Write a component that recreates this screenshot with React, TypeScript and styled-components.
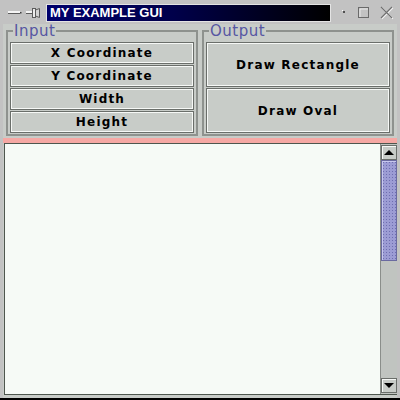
import * as React from "react";
import styled, { createGlobalStyle } from "styled-components";

const GlobalStyle = createGlobalStyle`
  html, body {
    margin: 0;
    padding: 0;
    width: 400px;
    height: 400px;
    overflow: hidden;
    background: #c4c4c4;
  }
`;

const Frame = styled.div`
  width: 400px;
  height: 400px;
  box-sizing: border-box;
  display: flex;
  flex-direction: column;
  background: #c2c2c2;
  border-bottom: 2px solid #000;
`;

const TitleBar = styled.div`
  height: 24px;
  flex: none;
  display: flex;
  align-items: flex-start;
  padding-top: 4px;
  box-sizing: border-box;
`;

const MenuGlyph = styled.svg`
  width: 46px;
  height: 18px;
  flex: none;
`;

const Title = styled.div`
  width: 285px;
  height: 18px;
  box-sizing: border-box;
  border: 1px solid #e4e4e4;
  background: linear-gradient(to right, #00006c 0%, #00004a 45%, #000000 100%);
  color: #fff;
  font-family: "Liberation Sans", Arial, sans-serif;
  font-weight: bold;
  font-size: 13px;
  line-height: 16px;
  padding-left: 3px;
  white-space: nowrap;
`;

const Controls = styled.svg`
  width: 69px;
  height: 18px;
  flex: none;
`;

const Client = styled.div`
  flex: 1;
  display: flex;
  flex-direction: column;
  margin: 0 3px;
  padding-bottom: 3px;
  background: #c8ccc8;
  min-height: 0;
`;

const ControlRow = styled.div`
  display: flex;
  gap: 4px;
  padding: 0 3px;
`;

const Group = styled.fieldset`
  flex: 1;
  margin: 0;
  min-width: 0;
  padding: 4px 2px 1px 2px;
  border: 2px solid #8e928e;
  display: flex;
  flex-direction: column;
  gap: 1px;
`;

const Caption = styled.legend`
  margin-left: 3px;
  padding: 0 1px;
  font-family: "DejaVu Sans", sans-serif;
  font-size: 15px;
  line-height: 14px;
  letter-spacing: 0.5px;
  color: #5656a2;
`;

const Button = styled.div<{ $tall?: boolean }>`
  height: ${(p) => (p.$tall ? 45 : 22)}px;
  box-sizing: border-box;
  border: 1px solid #6a6e6a;
  box-shadow: inset 0 0 0 1px #f6f8f6;
  background: #c8ccc8;
  display: flex;
  align-items: center;
  justify-content: center;
  font-family: "DejaVu Sans", sans-serif;
  font-weight: bold;
  font-size: 12px;
  letter-spacing: 1.2px;
  color: #000;
`;

const Divider = styled.div`
  height: 5px;
  margin-top: 2px;
  background: #f6a8a4;
  flex: none;
`;

const Pane = styled.div`
  flex: 1;
  display: flex;
  min-height: 0;
  border: 1px solid #4e564e;
  border-right: none;
  margin-left: 1px;
`;

const TextArea = styled.div`
  flex: 1;
  background: #f6faf6;
`;

const ScrollBar = styled.div`
  width: 17px;
  display: flex;
  flex-direction: column;
  background: #c0c4c0;
  border-left: 1px solid #8a8e8a;
  padding: 1px 0;
  box-sizing: border-box;
`;

const Arrow = styled.div<{ $down?: boolean }>`
  height: 15px;
  box-sizing: border-box;
  border: 1px solid #6a6e6a;
  box-shadow: inset 1px 1px 0 #f6f8f6;
  background: #c8ccc8;
  display: flex;
  align-items: center;
  justify-content: center;
  margin-top: ${(p) => (p.$down ? "auto" : "0")};

  &::after {
    content: "";
    border-left: 5px solid transparent;
    border-right: 5px solid transparent;
    ${(p) =>
      p.$down ? "border-top: 5px solid #000;" : "border-bottom: 5px solid #000;"}
  }
`;

const Thumb = styled.div`
  height: 101px;
  box-sizing: border-box;
  border: 1px solid #6a6aa0;
  box-shadow: inset 1px 1px 0 #c8c8ee;
  background-color: #9c9cd4;
  background-image: radial-gradient(circle, #6e6eb0 0.8px, transparent 1px);
  background-size: 3px 3px;
`;

const inputs = ["X Coordinate", "Y Coordinate", "Width", "Height"];
const outputs = ["Draw Rectangle", "Draw Oval"];

export default function App() {
  return (
    <>
      <GlobalStyle />
      <Frame>
        <TitleBar>
          {/* window menu: dash, dot and pin */}
          <MenuGlyph viewBox="0 0 46 18">
            <rect x="8" y="7" width="12" height="2" fill="#f4f4f4" />
            <rect x="8" y="9" width="12" height="1" fill="#5c5c5c" />
            <rect x="20" y="8" width="1.5" height="1.5" fill="#404040" />
            <rect x="26" y="7" width="7" height="2" fill="#f4f4f4" />
            <rect x="26" y="9" width="7" height="1" fill="#5c5c5c" />
            <rect x="32.5" y="4.5" width="3" height="9" fill="#ececec" stroke="#5c5c5c" strokeWidth="1" />
            <path d="M35.5 6 L39.5 4.5 L39.5 13.5 L35.5 12 Z" fill="#d4d4d4" stroke="#5c5c5c" strokeWidth="1" />
          </MenuGlyph>
          <Title>MY EXAMPLE GUI</Title>
          <Controls viewBox="0 0 69 18">
            <rect x="12" y="7" width="2" height="2" fill="#505050" />
            <rect x="11" y="6" width="1" height="1" fill="#fff" />
            <rect x="27.5" y="3.5" width="10" height="10" fill="none" stroke="#6a6a6a" />
            <path d="M29 13 V5 H37" fill="none" stroke="#f4f4f4" strokeWidth="0.8" />
            <path d="M50 3 L61 14 M61 3 L50 14" stroke="#f4f4f4" strokeWidth="1.4" transform="translate(0.8 0.8)" />
            <path d="M50 3 L61 14 M61 3 L50 14" stroke="#707070" strokeWidth="1.2" />
          </Controls>
        </TitleBar>
        <Client>
          <ControlRow>
            <Group>
              <Caption>Input</Caption>
              {inputs.map((label) => (
                <Button key={label}>{label}</Button>
              ))}
            </Group>
            <Group>
              <Caption>Output</Caption>
              {outputs.map((label) => (
                <Button key={label} $tall>
                  {label}
                </Button>
              ))}
            </Group>
          </ControlRow>
          <Divider />
          <Pane>
            <TextArea />
            <ScrollBar>
              <Arrow />
              <Thumb />
              <Arrow $down />
            </ScrollBar>
          </Pane>
        </Client>
      </Frame>
    </>
  );
}
